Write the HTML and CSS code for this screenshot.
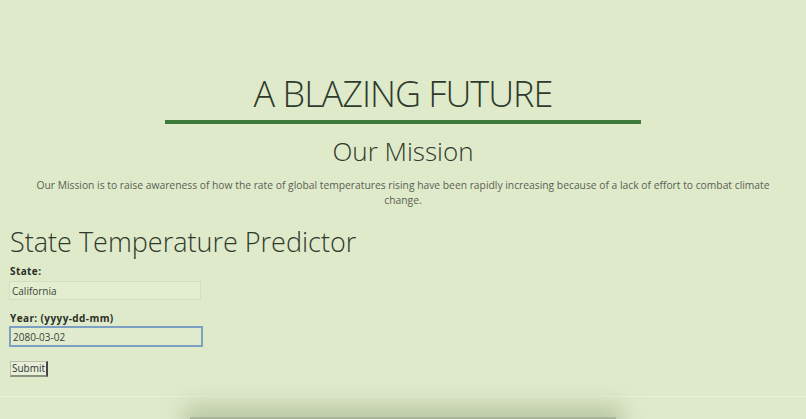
FILE: index.html
```html
<!DOCTYPE html>
<html lang="en">

<head>
  <meta charset="UTF-8">
  <meta name="viewport" content="width=device-width, initial-scale=1.0">
  <title>A Blazing Future</title>
  <link rel="stylesheet" href="styles.css">
</head>

<body>
  <header>
    <h1>A BLAZING FUTURE</h1>
    <div class="rule"></div>
    <h2>Our Mission</h2>
    <p class="mission">Our Mission is to raise awareness of how the rate of global temperatures rising have been rapidly increasing because of a lack of effort to combat climate change.</p>
  </header>

  <section id="predictor">
    <h3>State Temperature Predictor</h3>
    <form>
      <label for="state">State:</label>
      <input type="text" id="state" class="field" value="California">

      <label for="year">Year: (yyyy-dd-mm)</label>
      <input type="text" id="year" class="field focused" value="2080-03-02">

      <button type="button" class="submit">Submit</button>
    </form>
  </section>

  <hr>

  <div id="chart"></div>
</body>

</html>
```
FILE: styles.css
```css
body {
  font-family: 'Open Sans', sans-serif;
  background-color: #dfeaca;
  color: #333;
  margin: 0;
  padding: 0;
}

header {
  text-align: center;
  padding-top: 74px;
}

h1 {
  font-size: 36px;
  font-weight: 300;
  letter-spacing: -1px;
  color: #2f3a2c;
  margin: 0;
  line-height: 40px;
}

.rule {
  width: 476px;
  height: 4px;
  margin: 6px auto 0;
  background-color: #3e7b3b;
}

h2 {
  font-size: 26px;
  font-weight: 300;
  color: #2f3a2c;
  margin: 9px 0 0;
  line-height: 36px;
}

.mission {
  font-size: 10.3px;
  color: #5a5f55;
  line-height: 15px;
  margin: 9px 30px 0;
}

#predictor {
  padding: 0 10px;
}

h3 {
  font-size: 27px;
  font-weight: 300;
  color: #2f3a2c;
  margin: 18px 0 0;
  line-height: 32px;
}

form {
  display: flex;
  flex-direction: column;
  align-items: flex-start;
}

label {
  font-size: 10px;
  font-weight: 700;
  letter-spacing: 0.4px;
  color: #2a2f28;
  margin-top: 6px;
  line-height: 14px;
}

.field {
  width: 186px;
  height: 15px;
  margin: 3px 0 0 -1px;
  padding: 1px 2px;
  font-family: inherit;
  font-size: 10px;
  color: #3a3f38;
  background-color: #e3eed0;
  border: 1px solid #d3dec1;
  outline: none;
}

.field + label {
  margin-top: 11px;
}

.focused {
  margin-top: 1px;
  border: 2px solid #7c9fc4;
  background-color: #e1ecce;
}

.submit {
  margin-top: 14px;
  padding: 0 1px;
  line-height: 13px;
  font-family: inherit;
  font-size: 10px;
  color: #333;
  background-color: #e7efd9;
  border: 1px solid #b8c0ac;
  border-right: 2px solid #444;
  border-bottom: 2px solid #8a9080;
}

hr {
  border: 0;
  height: 1px;
  background-color: #e6f0d6;
  margin: 19px 0 0;
}

#chart {
  width: 426px;
  height: 60px;
  margin: 20px auto 0;
  background-color: #a9b697;
  box-shadow: 0 -6px 20px 6px rgba(120, 140, 100, 0.35);
}
```
